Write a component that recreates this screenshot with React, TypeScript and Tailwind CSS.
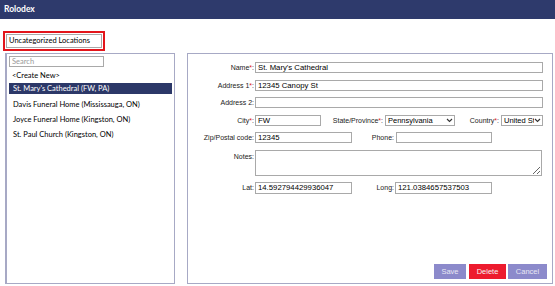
import React from "react";

const locations = [
  { id: "1", label: "St. Mary's Cathedral (FW, PA)" },
  { id: "2", label: "Davis Funeral Home (Mississauga, ON)" },
  { id: "3", label: "Joyce Funeral Home (Kingston, ON)" },
  { id: "4", label: "St. Paul Church (Kingston, ON)" },
];

const inputCls =
  "h-[11px] border border-[#a9a9a9] bg-white px-[2px] text-[7.75px] leading-[9px] text-black outline-none";

function Req() {
  return <span className="text-[#e01b24]">*</span>;
}

function Label({ children, className = "" }: { children: React.ReactNode; className?: string }) {
  return <span className={"text-right text-[7px] leading-[11px] text-[#222] " + className}>{children}</span>;
}

function FakeSelect({ value, className = "" }: { value: string; className?: string }) {
  return (
    <div className={"flex h-[11px] items-center border border-[#a9a9a9] bg-white pl-[2px] pr-[1px] " + className}>
      <span className="flex-1 overflow-hidden whitespace-nowrap text-[7.5px] leading-[9px] text-black">{value}</span>
      <svg width="7" height="5" viewBox="0 0 7 5" className="shrink-0">
        <path d="M1 1l2.5 2.5L6 1" fill="none" stroke="#333" strokeWidth="1.1" />
      </svg>
    </div>
  );
}

export default function App() {
  return (
    <div className="h-[286px] w-[555px] overflow-hidden bg-white" style={{ fontFamily: '"Liberation Sans", Arial, sans-serif' }}>
      <div className="flex h-[19px] items-center bg-[#2e3a6c] pl-[4px]">
        <span className="text-[8.5px] font-bold text-white" style={{ fontFamily: "Lato, sans-serif" }}>
          Rolodex
        </span>
      </div>

      <div className="ml-[3px] mt-[12px] w-[102px] border-2 border-[#e3151b] p-px">
        <div
          className="flex h-[14px] items-center border border-[#a9a9a9] pl-[2px] text-[7.5px] text-black"
          style={{ fontFamily: "Lato, sans-serif" }}
        >
          Uncategorized Locations
        </div>
      </div>

      <div className="ml-[5px] mt-[2px] flex h-[231px] gap-[12px]">
        <div
          className="flex w-[170px] flex-col border border-l-2 border-[#a7a9c5] pl-[2px] pr-[2px] pt-[2px]"
          style={{ fontFamily: "Lato, sans-serif" }}
        >
          <input
            readOnly
            placeholder="Search"
            className="h-[11px] w-[95px] border border-[#a9a9a9] px-[2px] text-[7.5px] text-black outline-none placeholder:text-[#999]"
          />
          <div className="mt-[2px] h-[13px] pl-[3px] text-[7.5px] leading-[13px] text-black">&lt;Create New&gt;</div>
          <div className="mt-px h-[11px] bg-[#2c3868] pl-[4px] text-[7.5px] leading-[11px] text-white">
            {locations[0].label}
          </div>
          <div className="mt-[3px]">
            {locations.slice(1).map((l) => (
              <div key={l.id} className="h-[15px] pl-[4px] text-[7.5px] leading-[15px] text-black">
                {l.label}
              </div>
            ))}
          </div>
        </div>

        <div className="flex w-[366px] flex-col border border-[#a7a9c5] pt-[8px]">
          <div className="flex flex-col gap-[6.5px]">
            <div className="flex items-center gap-px">
              <Label className="w-[66px]">
                Name<Req />:
              </Label>
              <input readOnly defaultValue="St. Mary's Cathedral" className={inputCls + " w-[288px]"} />
            </div>
            <div className="flex items-center gap-px">
              <Label className="w-[66px]">
                Address 1<Req />:
              </Label>
              <input readOnly defaultValue="12345 Canopy St" className={inputCls + " w-[288px]"} />
            </div>
            <div className="flex items-center gap-px">
              <Label className="w-[66px]">Address 2:</Label>
              <input readOnly defaultValue="" className={inputCls + " w-[288px]"} />
            </div>
            <div className="flex items-center gap-px">
              <Label className="w-[66px]">
                City<Req />:
              </Label>
              <input readOnly defaultValue="FW" className={inputCls + " w-[66px]"} />
              <Label className="w-[61px]">
                State/Province<Req />:
              </Label>
              <FakeSelect value="Pennsylvania" className="ml-px w-[70px]" />
              <Label className="w-[43px]">
                Country<Req />:
              </Label>
              <FakeSelect value="United States" className="ml-px w-[42px]" />
            </div>
            <div className="flex items-center gap-px">
              <Label className="w-[66px]">Zip/Postal code:</Label>
              <input readOnly defaultValue="12345" className={inputCls + " w-[97px]"} />
              <Label className="w-[41px]">Phone:</Label>
              <input readOnly defaultValue="" className={inputCls + " ml-px w-[96px]"} />
            </div>
            <div className="flex items-start gap-px">
              <Label className="mt-px w-[66px]">Notes:</Label>
              <textarea readOnly className="h-[26px] w-[287px] border border-[#a9a9a9] text-[7px] outline-none" />
            </div>
          </div>
          <div className="mt-[6px] flex items-center gap-px">
            <Label className="w-[66px]">Lat:</Label>
            <input readOnly defaultValue="14.592794429936047" className={inputCls + " h-[12px] w-[97px]"} />
            <Label className="w-[41px]">Long:</Label>
            <input readOnly defaultValue="121.0384657537503" className={inputCls + " h-[12px] w-[97px]"} />
          </div>

          <div className="mt-auto flex justify-end gap-[2px] pb-[4px] pr-[5px]">
            <button className="mr-px h-[15px] w-[32px] bg-[#8c8acb] text-[7.5px] text-[#e8e8f4]">Save</button>
            <button className="h-[15px] w-[37px] bg-[#ed1b2e] text-[7.5px] text-[#f4f4f4]">Delete</button>
            <button className="h-[15px] w-[39px] bg-[#8c8acb] text-[7.5px] text-[#e8e8f4]">Cancel</button>
          </div>
        </div>
      </div>
    </div>
  );
}
